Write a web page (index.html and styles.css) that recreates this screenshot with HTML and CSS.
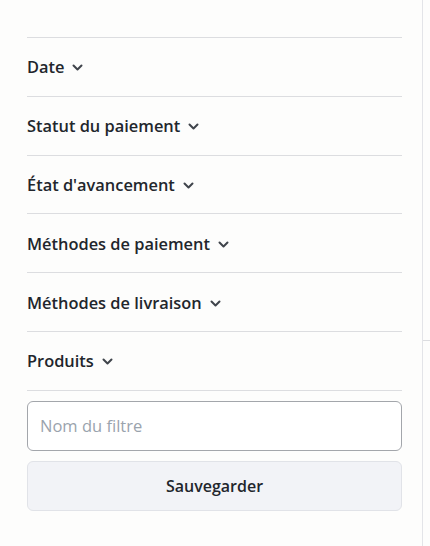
FILE: index.html
```html
<!DOCTYPE html>
<html lang="fr">

<head>
    <meta charset="UTF-8">
    <meta name="viewport" content="width=device-width, initial-scale=1.0">
    <title>Filtres</title>
    <link rel="stylesheet" href="styles.css">
</head>

<body>
    <div class="layout">
        <aside class="filter-panel">
            <ul class="filter-list">
                <li class="filter-item"><button type="button">Date <svg class="chevron" viewBox="0 0 11 7"><path d="M1.5 1.5l4 4 4-4"/></svg></button></li>
                <li class="filter-item"><button type="button">Statut du paiement <svg class="chevron" viewBox="0 0 11 7"><path d="M1.5 1.5l4 4 4-4"/></svg></button></li>
                <li class="filter-item"><button type="button">État d'avancement <svg class="chevron" viewBox="0 0 11 7"><path d="M1.5 1.5l4 4 4-4"/></svg></button></li>
                <li class="filter-item"><button type="button">Méthodes de paiement <svg class="chevron" viewBox="0 0 11 7"><path d="M1.5 1.5l4 4 4-4"/></svg></button></li>
                <li class="filter-item"><button type="button">Méthodes de livraison <svg class="chevron" viewBox="0 0 11 7"><path d="M1.5 1.5l4 4 4-4"/></svg></button></li>
                <li class="filter-item"><button type="button">Produits <svg class="chevron" viewBox="0 0 11 7"><path d="M1.5 1.5l4 4 4-4"/></svg></button></li>
            </ul>
            <form class="save-form">
                <input type="text" name="filterName" placeholder="Nom du filtre">
                <button type="submit" class="save-button">Sauvegarder</button>
            </form>
        </aside>
        <div class="content">
            <div class="content-header"></div>
        </div>
    </div>
</body>

</html>
```

FILE: styles.css
```css
html,
body {
    margin: 0;
    padding: 0;
    height: 100%;
}

body {
    font-family: "Open Sans", "Noto Sans", sans-serif;
    background-color: #fdfdfc;
    color: #1f2329;
}

.layout {
    display: flex;
    height: 100%;
}

.filter-panel {
    width: 375px;
    flex-shrink: 0;
    padding: 37px 20px 0 27px;
    border-right: 1px solid #e3e4e8;
}

.filter-list {
    list-style: none;
    margin: 0;
    padding: 0;
    border-bottom: 1px solid #dcdde0;
}

.filter-item {
    border-top: 1px solid #dcdde0;
}

.filter-item button {
    display: flex;
    align-items: center;
    gap: 8px;
    height: 57.8px;
    padding: 0;
    border: none;
    background: none;
    font-family: inherit;
    font-size: 16.4px;
    font-weight: 600;
    color: #22262c;
    cursor: pointer;
}

.chevron {
    width: 11px;
    height: 7px;
    fill: none;
    stroke: #3f444b;
    stroke-width: 2;
    stroke-linecap: round;
    stroke-linejoin: round;
    margin-top: 2px;
}

.save-form {
    display: flex;
    flex-direction: column;
    gap: 10px;
    padding-top: 10px;
}

.save-form input {
    box-sizing: border-box;
    height: 50px;
    padding: 0 12px;
    border: 1px solid #a3a6ab;
    border-radius: 6px;
    background-color: #fff;
    font-family: inherit;
    font-size: 16.5px;
    color: #1f2329;
}

.save-form input::placeholder {
    color: #9aa3ad;
}

.save-button {
    height: 50px;
    border: 1px solid #e1e3e8;
    border-radius: 6px;
    background-color: #f2f3f7;
    font-family: inherit;
    font-size: 16px;
    font-weight: 600;
    color: #22262c;
    cursor: pointer;
}

.content {
    flex-grow: 1;
}

.content-header {
    height: 340px;
    border-bottom: 1px solid #dcdde0;
}
```
